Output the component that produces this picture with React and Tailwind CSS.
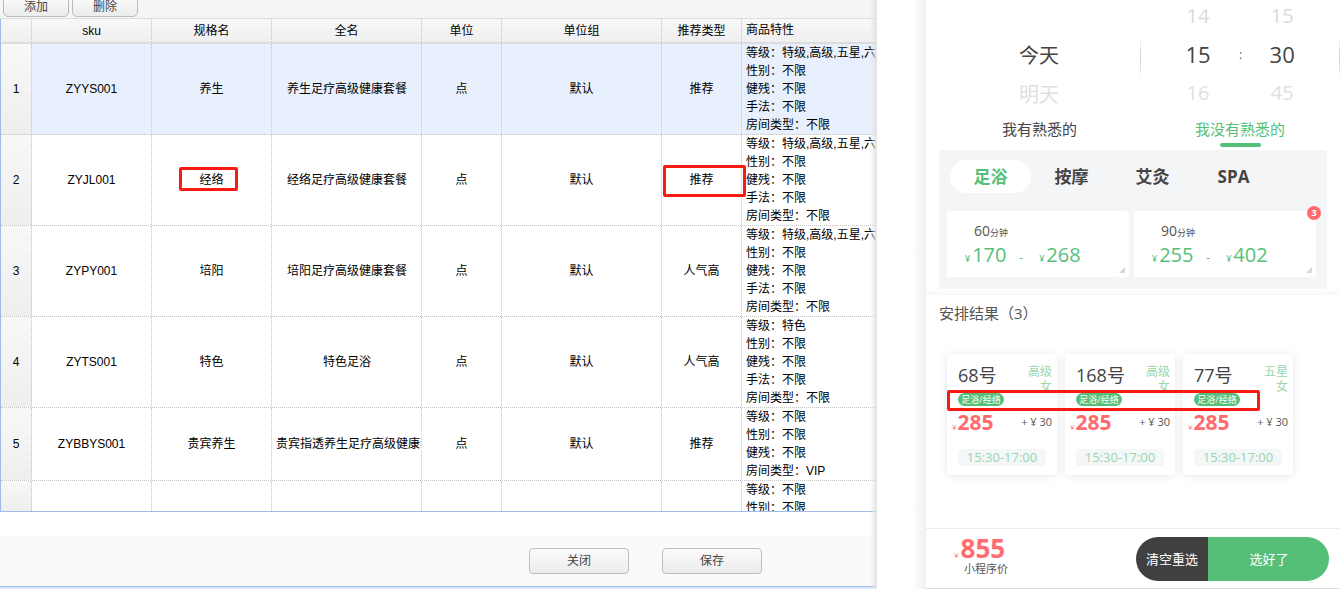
import React from 'react';

const cols = ['w-[31px]', 'w-[120px]', 'w-[120px]', 'w-[150px]', 'w-[80px]', 'w-[160px]', 'w-[80px]'];

const rows = [
    { no: '1', sku: 'ZYYS001', name: '养生', full: '养生足疗高级健康套餐', type: '推荐', h: 'h-[91px]', sel: true, attrs: ['等级：特级,高级,五星,六星', '性别：不限', '健残：不限', '手法：不限', '房间类型：不限'] },
    { no: '2', sku: 'ZYJL001', name: '经络', full: '经络足疗高级健康套餐', type: '推荐', h: 'h-[91px]', attrs: ['等级：特级,高级,五星,六星', '性别：不限', '健残：不限', '手法：不限', '房间类型：不限'] },
    { no: '3', sku: 'ZYPY001', name: '培阳', full: '培阳足疗高级健康套餐', type: '人气高', h: 'h-[91px]', attrs: ['等级：特级,高级,五星,六星', '性别：不限', '健残：不限', '手法：不限', '房间类型：不限'] },
    { no: '4', sku: 'ZYTS001', name: '特色', full: '特色足浴', type: '人气高', h: 'h-[91px]', attrs: ['等级：特色', '性别：不限', '健残：不限', '手法：不限', '房间类型：不限'] },
    { no: '5', sku: 'ZYBBYS001', name: '贵宾养生', full: '贵宾指透养生足疗高级健康套餐', type: '推荐', h: 'h-[73px]', attrs: ['等级：不限', '性别：不限', '健残：不限', '房间类型：VIP'] },
    { no: '', sku: '', name: '', full: '', type: '', h: 'h-[31px]', attrs: ['等级：不限', '性别：不限'] },
];

const Cell = ({ w, children, className = '' }) => (
    <div className={`${w} shrink-0 flex items-center justify-center overflow-hidden whitespace-nowrap border-r border-dotted border-[#c4c4c4] ${className}`}>
        {children}
    </div>
);

const DataGrid = () => (
    <div className="h-[492px] overflow-hidden border-l border-[#9dbce6] bg-white">
        <div className="flex h-[25px] border-b-2 border-[#dcdcdc] bg-gradient-to-b from-[#f8f8f8] to-[#efefef]">
            {['', 'sku', '规格名', '全名', '单位', '单位组', '推荐类型'].map((t, i) => (
                <Cell key={i} w={cols[i]}>{t}</Cell>
            ))}
            <div className="flex-1 pl-[4px] leading-[23px] whitespace-nowrap">商品特性</div>
        </div>
        {rows.map((r) => (
            <div key={r.sku + r.no} className={`${r.h} flex overflow-hidden border-b border-dotted border-[#c4c4c4] ${r.sel ? 'bg-[#e8f0fd]' : ''}`}>
                <Cell w={cols[0]} className="bg-gradient-to-b from-[#f8f8f8] to-[#eeeeee]">{r.no}</Cell>
                <Cell w={cols[1]}>{r.sku}</Cell>
                <Cell w={cols[2]}>{r.name}</Cell>
                <Cell w={cols[3]} className="!justify-start pl-[4px]">
                    <span className={r.full.length > 12 ? '' : 'w-[142px] text-center'}>{r.full}</span>
                </Cell>
                <Cell w={cols[4]}>{r.sku ? '点' : ''}</Cell>
                <Cell w={cols[5]}>{r.sku ? '默认' : ''}</Cell>
                <Cell w={cols[6]}>{r.type}</Cell>
                <div className="flex-1 overflow-hidden whitespace-nowrap pl-[4px] leading-[18px]">
                    {r.attrs.map((a) => <div key={a}>{a}</div>)}
                </div>
            </div>
        ))}
    </div>
);

const LeftPanel = () => (
    <div className="relative z-10 flex h-[589px] w-[877px] shrink-0 flex-col overflow-hidden bg-white text-[12px] text-black font-['Liberation_Sans','Noto_Sans_CJK_SC',sans-serif]">
        <div className="flex h-[19px] shrink-0 gap-[3px] border-b border-[#dddddd] bg-[#f5f5f5] pl-[3px]">
            {['添加', '删除'].map((t) => (
                <button key={t} className="-mt-[3px] h-[20px] w-[66px] rounded-b-[5px] border border-[#bdbdbd] bg-gradient-to-b from-[#fafafa] to-[#ececec] text-[#444]">{t}</button>
            ))}
        </div>
        <DataGrid />
        <div className="h-[25px] shrink-0 border-t border-[#9dbce6]" />
        <div className="flex h-[50px] shrink-0 items-center gap-[33px] bg-[#fafafa] pl-[529px]">
            {['关闭', '保存'].map((t) => (
                <button key={t} className="h-[26px] w-[100px] rounded-[4px] border border-[#bdbdbd] bg-gradient-to-b from-[#fbfbfb] to-[#ececec] text-[#444]">{t}</button>
            ))}
        </div>
        <div className="flex-1 border-t border-[#9dbce6] bg-[#dce9fb]" />
        {/* 右侧阴影 */}
        <div className="absolute right-0 top-0 h-full w-[7px] bg-gradient-to-r from-transparent to-[#e2e2e2]" />
        {/* 红框标注 */}
        <div className="absolute left-[179px] top-[167px] h-[24px] w-[59px] rounded-[2px] border-[3px] border-[#fb1a12]" />
        <div className="absolute left-[663px] top-[165px] h-[32px] w-[83px] rounded-[2px] border-[3px] border-[#fb1a12]" />
    </div>
);

const Wheel = ({ top, mid, bottom, className = '' }) => (
    <div className={`flex flex-col items-center ${className}`}>
        <div className="h-[35px] text-[20px] leading-[32px] text-[#dadada]">{top}</div>
        <div className="h-[38px] text-[22px] leading-[39px] text-[#444]">{mid}</div>
        <div className="h-[39px] text-[20px] leading-[39px] text-[#e0e0e0]">{bottom}</div>
    </div>
);

const Duration = ({ min, a, b, badge }) => (
    <div className="relative h-[66px] w-[182px] rounded-t-[3px] bg-white text-[#55bf78]">
        <div className="pl-[27px] pt-[8px] text-[14px] leading-[24px] text-[#555]">{min}<span className="text-[9px]">分钟</span></div>
        <div className="flex items-baseline pl-[18px] text-[20px] leading-[20px]">
            <span className="text-[9px]">¥</span><span className="ml-[2px] w-[47px]">{a}</span>
            <span className="w-[17px] text-[12px]">-</span>
            <span className="ml-[3px] text-[9px]">¥</span><span className="ml-[2px]">{b}</span>
        </div>
        <div className="absolute bottom-[4px] right-[4px] h-0 w-0 border-b-[6px] border-l-[6px] border-b-[#d8d8d8] border-l-transparent" />
        {badge && (
            <div className="absolute -top-[5px] -right-[5px] flex h-[14px] w-[14px] items-center justify-center rounded-full bg-[#ff6b6f] text-[9px] font-bold text-white">{badge}</div>
        )}
    </div>
);

const techs = [
    { no: '68号', level: '高级' },
    { no: '168号', level: '高级' },
    { no: '77号', level: '五星' },
];

const TechCard = ({ no, level }) => (
    <div className="relative h-[121px] w-[110px] rounded-[3px] bg-white shadow-[0_1px_8px_rgba(0,0,0,0.1)]">
        <div className="flex h-[39px] justify-between pl-[11px] pr-[5px] pt-[8px]">
            <div className="text-[18px] leading-[26px] text-[#444]">{no}</div>
            <div className="pt-[2px] text-right text-[12px] leading-[15px] text-[#96d8aa]">{level}<br />女</div>
        </div>
        <div className="relative ml-[11px] h-[13px] w-[46px] rounded-full bg-[#55bf78] text-center text-[9px] leading-[13px] text-white">足浴/经络</div>
        <div className="mt-[2px] flex h-[28px] items-center justify-between pl-[5px] pr-[5px]">
            <div className="flex items-baseline text-[#ff6b6f]">
                <span className="text-[8px]">¥</span>
                <span className="ml-[1px] text-[21px] font-bold leading-[24px]">285</span>
            </div>
            <div className="text-[11px] leading-[16px] text-[#555]">+ ¥ 30</div>
        </div>
        <div className="mx-[11px] mt-[13px] h-[17px] rounded-[3px] bg-[#f4f6f8] text-center text-[13px] leading-[17px] text-[#96d8aa]">15:30-17:00</div>
    </div>
);

const RightPanel = () => (
    <div className="relative flex h-[589px] flex-1 flex-col overflow-hidden border-b border-[#dddddd] bg-white font-['Open_Sans','Noto_Sans_CJK_SC',sans-serif]">
        <div className="flex h-[120px]">
            <div className="flex w-[214px] flex-col items-center pl-[12px]">
                <div className="h-[36px]" />
                <div className="h-[39px] text-[20px] leading-[40px] text-[#444]">今天</div>
                <div className="h-[39px] text-[20px] leading-[39px] text-[#e0e0e0]">明天</div>
            </div>
            <div className="mt-[35px] h-[45px] w-px bg-gradient-to-b from-transparent via-[#cccccc] to-transparent" />
            <div className="flex w-[198px]">
                <Wheel top="14" mid="15" bottom="16" className="ml-[41px] w-[32px]" />
                <div className="ml-[25px] mt-[46px] text-[12px] text-[#555]">:</div>
                <Wheel top="15" mid="30" bottom="45" className="ml-[22px] w-[36px]" />
            </div>
            <div className="mt-[35px] h-[45px] w-px bg-gradient-to-b from-transparent via-[#cccccc] to-transparent" />
        </div>
        <div className="flex h-[30px] text-[15px]">
            <div className="w-[226px] pl-[76px] leading-[18px] text-[#444]">我有熟悉的</div>
            <div className="relative flex-1 pl-[43px] leading-[18px] text-[#55bf78]">
                我没有熟悉的
                <div className="absolute left-[68px] top-[23px] h-[4px] w-[41px] rounded-full bg-[#55bf78]" />
            </div>
        </div>
        <div className="ml-[13px] h-[139px] w-[388px] rounded-[3px] bg-[#f4f5f7] px-[8px] pt-[10px]">
            <div className="flex h-[33px] items-center pl-[3px] text-[17px] font-bold text-[#444]">
                <div className="w-[81px] rounded-full bg-white text-center leading-[33px] text-[#55bf78]">足浴</div>
                <div className="w-[81px] text-center">按摩</div>
                <div className="w-[81px] text-center">艾灸</div>
                <div className="w-[81px] text-center">SPA</div>
            </div>
            <div className="mt-[18px] flex gap-[5px]">
                <Duration min="60" a="170" b="268" />
                <Duration min="90" a="255" b="402" badge="3" />
            </div>
        </div>
        <div className="relative mt-[6px] h-[233px] shadow-[0_-3px_5px_rgba(0,0,0,0.04)]">
            <div className="pl-[13px] pt-[8px] text-[15px] leading-[20px] text-[#555]">安排结果（3）</div>
            <div className="mt-[31px] flex gap-[8px] pl-[21px]">
                {techs.map((t) => <TechCard key={t.no} {...t} />)}
            </div>
            {/* 红框标注 */}
            <div className="absolute left-[21px] top-[95px] h-[21px] w-[313px] rounded-[2px] border-[3px] border-[#fb1a12]" />
        </div>
        <div className="flex flex-1 items-center border-t border-[#e8eef8] pr-[11px]">
            <div className="ml-[28px] flex flex-col pb-[8px]">
                <div className="flex items-baseline text-[#ff6b6f]">
                    <span className="text-[8px]">¥</span>
                    <span className="ml-[2px] text-[26px] font-bold leading-[26px]">855</span>
                </div>
                <div className="ml-[10px] mt-[1px] text-[11px] leading-[13px] text-[#555]">小程序价</div>
            </div>
            <div className="ml-auto flex h-[44px] overflow-hidden rounded-full text-[13px] text-white">
                <div className="w-[72px] bg-[#404040] pl-[10px] leading-[44px]">清空重选</div>
                <div className="w-[121px] bg-[#55bf78] pl-[1px] text-center leading-[44px]">选好了</div>
            </div>
        </div>
    </div>
);

const App = () => (
    <div className="flex h-[589px] w-[1340px] overflow-hidden bg-white">
        <LeftPanel />
        <div className="h-full w-[49px] shrink-0 bg-gradient-to-r from-white from-[70%] to-[#f0f0f0]" />
        <RightPanel />
    </div>
);

export default App;
